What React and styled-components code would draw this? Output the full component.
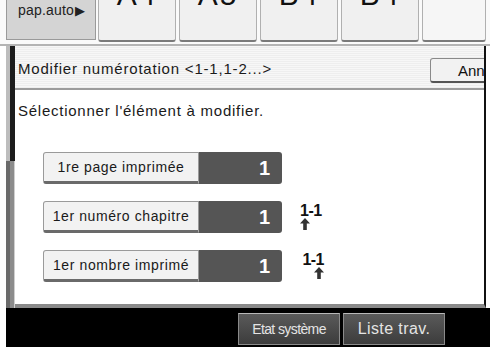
import styled, { createGlobalStyle } from "styled-components";

const GlobalStyle = createGlobalStyle`
    body {
        margin: 0;
        background: #fff;
        font-family: "Liberation Sans", Arial, sans-serif;
    }
`;

const Screen = styled.div`
    width: 490px;
    height: 351px;
    background: #fff;
    overflow: hidden;
`;

const TabBar = styled.div`
    display: flex;
    align-items: flex-start;
    gap: 3px;
    height: 44px;
    padding-left: 6px;
    background: #fafafa;
`;

const PaperTab = styled.div`
    width: 90px;
    height: 40px;
    margin-right: -1px;
    box-sizing: border-box;
    background: #d4d4d4;
    border: 1px solid #9a9a9a;
    border-top: none;
    padding: 2px 0 0 11px;
    font-size: 14px;
    color: #222;
    letter-spacing: 0.2px;
`;

const Pointer = styled.span`
    font-size: 13px;
    margin-left: 1px;
`;

const SizeTab = styled.div`
    width: ${p => p.$w || 78}px;
    height: 42px;
    box-sizing: border-box;
    background: ${p => (p.$blank ? "#f6f6f6" : "#f0f0f0")};
    border: 1px solid #b0b0b0;
    border-top: none;
    border-bottom: 2px solid #7a7a7a;
    border-radius: 0 0 3px 3px;
    overflow: hidden;
    text-align: center;
    font-size: 30px;
    line-height: 30px;
    color: #111;
`;

const SizeLabel = styled.div`
    margin-top: -20px;
    letter-spacing: 2px;
`;

const Main = styled.div`
    display: flex;
    height: 264px;
    border-top: 2px solid #b4b4b4;
    box-sizing: border-box;
`;

const LeftRail = styled.div`
    width: 9px;
    margin-left: 6px;
    display: flex;
    flex-direction: column;
`;

const RailPart = styled.div`
    flex: ${p => p.$grow};
    background: ${p => p.$dark
        ? "linear-gradient(90deg, #bdbdbd 0 4px, #1c1c1c 4px 9px)"
        : "linear-gradient(90deg, #6a6a6a 0 4px, #8c8c8c 4px 8px, #cfcfcf 8px 9px)"};
`;

const Panel = styled.div`
    width: 469px;
    background: #fff;
    border-right: 2px solid #111;
    border-bottom: 4px solid #8a8a8a;
    box-sizing: content-box;
    overflow: hidden;
    display: flex;
    flex-direction: column;
`;

const TitleRow = styled.div`
    height: 40px;
    display: flex;
    align-items: center;
    justify-content: space-between;
    padding: 2px 0 0 3px;
    background: repeating-linear-gradient(180deg, #f7f7f7 0 1px, #eeeeee 1px 2px);
    border-bottom: 2px solid #9c9c9c;
    font-size: 15px;
    letter-spacing: 0.8px;
    color: #1a1a1a;
`;

const CancelButton = styled.div`
    width: 62px;
    height: 25px;
    margin-top: 4px;
    margin-right: -8px;
    box-sizing: border-box;
    background: #f2f2f2;
    border: 1px solid #8a8a8a;
    border-bottom: 2px solid #555;
    border-radius: 3px;
    padding: 3px 0 0 27px;
    font-size: 15px;
    letter-spacing: 0;
    color: #111;
    white-space: nowrap;
`;

const Body = styled.div`
    display: flex;
    flex-direction: column;
    padding: 12px 0 0 3px;
`;

const Prompt = styled.div`
    font-size: 15px;
    letter-spacing: 0.75px;
    color: #1a1a1a;
    margin-bottom: 33px;
`;

const Rows = styled.div`
    display: flex;
    flex-direction: column;
    gap: 17px;
    padding-left: 25px;
`;

const Row = styled.div`
    display: flex;
    align-items: center;
    height: 32px;
`;

const LabelButton = styled.div`
    width: 156px;
    height: 32px;
    box-sizing: border-box;
    background: #f2f2f2;
    border: 1px solid #9a9a9a;
    border-bottom: 3px solid #6a6a6a;
    border-radius: 3px 0 0 3px;
    display: flex;
    align-items: center;
    justify-content: center;
    font-size: 14px;
    color: #1a1a1a;
    letter-spacing: 0.6px;
`;

const ValueBox = styled.div`
    width: 83px;
    height: 32px;
    box-sizing: border-box;
    background: #555;
    border-radius: 0 3px 3px 0;
    display: flex;
    align-items: center;
    justify-content: flex-end;
    padding-right: 12px;
    font-size: 20px;
    font-weight: bold;
    color: #fff;
`;

const NumIcon = styled.div`
    margin-left: 18px;
    display: flex;
    flex-direction: column;
    align-items: ${p => (p.$arrow === "right" ? "flex-end" : "flex-start")};
    width: 24px;
    margin-top: -2px;
`;

const NumText = styled.span`
    font-size: 16px;
    font-weight: bold;
    line-height: 15px;
    color: #111;
    letter-spacing: -0.5px;
`;

const BottomBar = styled.div`
    height: 39px;
    margin-left: 6px;
    background: #000;
    display: flex;
    justify-content: flex-end;
    align-items: flex-start;
    gap: 3px;
    padding: 5px 45px 0 0;
    box-sizing: border-box;
`;

const SysButton = styled.div`
    width: 102px;
    height: 32px;
    box-sizing: border-box;
    background: linear-gradient(180deg, #5a5a5a, #3c3c3c);
    border: 1px solid #8a8a8a;
    border-top-color: #b8b8b8;
    display: flex;
    align-items: center;
    justify-content: center;
    color: #e4e4e4;
    font-size: ${p => p.$size}px;
    letter-spacing: ${p => p.$spacing}px;
`;

const rows = [
    { label: "1re page imprimée", value: "1" },
    { label: "1er numéro chapitre", value: "1", arrow: "left" },
    { label: "1er nombre imprimé", value: "1", arrow: "right" },
];

function UpArrow() {
    return (
        <svg width="10" height="12" viewBox="0 0 10 12">
            <path d="M5 0 L10 5.5 H6.8 V12 H3.2 V5.5 H0 Z" fill="#333" />
        </svg>
    );
}

export default function App() {
    return (
        <Screen>
            <GlobalStyle />
            <TabBar>
                <PaperTab>pap.auto<Pointer>▶</Pointer></PaperTab>
                <SizeTab><SizeLabel>A4</SizeLabel></SizeTab>
                <SizeTab><SizeLabel>A5</SizeLabel></SizeTab>
                <SizeTab><SizeLabel>B4</SizeLabel></SizeTab>
                <SizeTab><SizeLabel>B4</SizeLabel></SizeTab>
                <SizeTab $w={64} $blank />
            </TabBar>
            <Main>
                <LeftRail>
                    <RailPart $dark $grow={116} />
                    <RailPart $grow={148} />
                </LeftRail>
                <Panel>
                    <TitleRow>
                        <span>Modifier numérotation &lt;1-1,1-2...&gt;</span>
                        <CancelButton>Annuler</CancelButton>
                    </TitleRow>
                    <Body>
                        <Prompt>Sélectionner l'élément à modifier.</Prompt>
                        <Rows>
                            {rows.map(r => (
                                <Row key={r.label}>
                                    <LabelButton>{r.label}</LabelButton>
                                    <ValueBox>{r.value}</ValueBox>
                                    {r.arrow && (
                                        <NumIcon $arrow={r.arrow}>
                                            <NumText>1-1</NumText>
                                            <UpArrow />
                                        </NumIcon>
                                    )}
                                </Row>
                            ))}
                        </Rows>
                    </Body>
                </Panel>
            </Main>
            <BottomBar>
                <SysButton $size={14} $spacing={-0.6}>Etat système</SysButton>
                <SysButton $size={16} $spacing={0.4}>Liste trav.</SysButton>
            </BottomBar>
        </Screen>
    );
}
